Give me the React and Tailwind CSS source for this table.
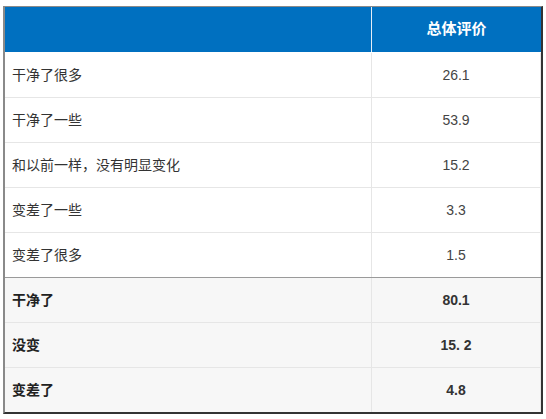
const ROWS = [
  { label: "干净了很多", value: "26.1" },
  { label: "干净了一些", value: "53.9" },
  { label: "和以前一样，没有明显变化", value: "15.2" },
  { label: "变差了一些", value: "3.3" },
  { label: "变差了很多", value: "1.5" },
];

const TOTALS = [
  { label: "干净了", value: "80.1" },
  { label: "没变", value: "15. 2" },
  { label: "变差了", value: "4.8" },
];

const CJK = "font-['Liberation_Sans','Noto_Sans_CJK_SC',sans-serif]";

export default function App() {
  return (
    <div className="bg-white w-[546px] h-[419px] pt-[6px] pl-[3px]">
      <div className={`w-[540px] border-t border-l-2 border-r-2 border-b-2 border-t-[#8a8a8a] border-l-[#8a8a8a] border-r-[#333] border-b-[#333] ${CJK}`}>
        {/* Header */}
        <div className="flex h-[45px] bg-[#0070c0]">
          <div className="w-[367px] border-r border-[#e6eef7]" />
          <div className="flex-1 flex items-center justify-center text-white text-[15px] font-bold">
            总体评价
          </div>
        </div>

        {/* Data rows */}
        {ROWS.map((r, i) => (
          <div key={r.label} className={`flex h-[45px] border-t bg-white ${i === 0 ? "border-transparent" : "border-[#e6e6e6]"}`}>
            <div className="w-[367px] border-r border-[#e6e6e6] flex items-center pl-[7px] text-[14px] text-[#333]">
              {r.label}
            </div>
            <div className="flex-1 border-r border-[#e6e6e6] flex items-center justify-center text-[14px] text-[#444]">
              {r.value}
            </div>
          </div>
        ))}

        {/* Summary rows */}
        {TOTALS.map((r, i) => (
          <div key={r.label} className={`flex h-[45px] border-t bg-[#f7f7f7] ${i === 0 ? "border-[#9a9a9a]" : "border-[#e6e6e6]"}`}>
            <div className="w-[367px] border-r border-[#e6e6e6] flex items-center pl-[7px] text-[14px] font-bold text-[#222]">
              {r.label}
            </div>
            <div className="flex-1 border-r border-[#e6e6e6] flex items-center justify-center text-[14px] font-bold text-[#333]">
              {r.value}
            </div>
          </div>
        ))}
      </div>
    </div>
  );
}
